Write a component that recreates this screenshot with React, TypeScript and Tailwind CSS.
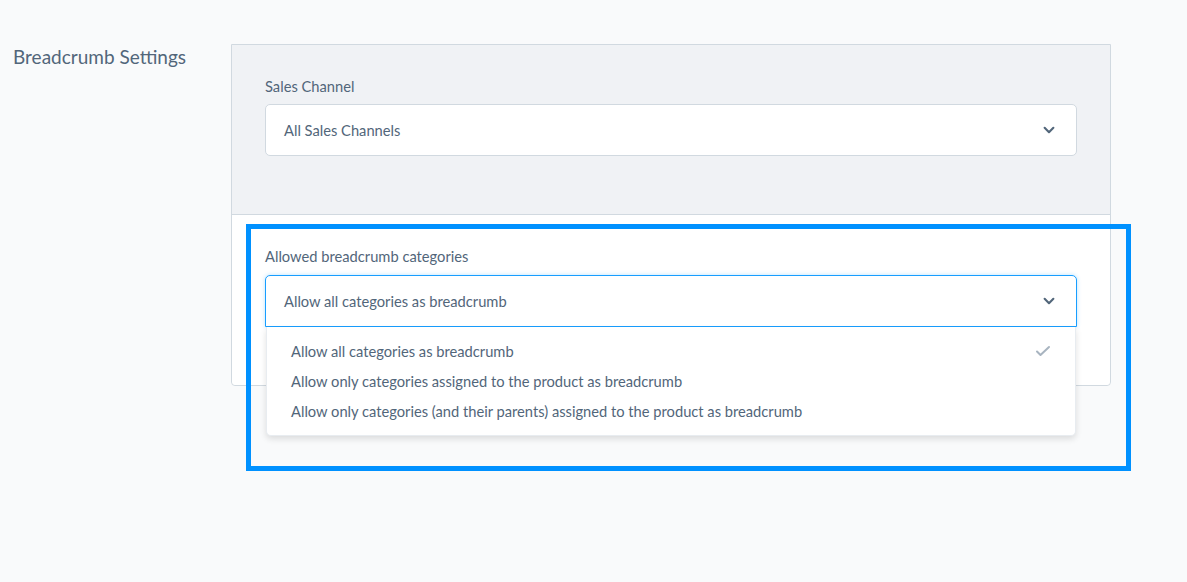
const options = [
  'Allow all categories as breadcrumb',
  'Allow only categories assigned to the product as breadcrumb',
  'Allow only categories (and their parents) assigned to the product as breadcrumb',
];

function Chevron() {
  return (
    <svg className="w-[14px] h-[14px] text-[#52667a]" viewBox="0 0 16 16" fill="none">
      <path d="M3 5.5l5 5 5-5" stroke="currentColor" strokeWidth={2.4} strokeLinecap="round" strokeLinejoin="round" />
    </svg>
  );
}

export default function App() {
  return (
    <div
      className="relative min-h-[582px] bg-[#f9fafb] text-[#52667a] pt-[44px] pl-[13px] flex"
      style={{ fontFamily: 'Lato, "Noto Sans", sans-serif' }}
    >
      <h2 className="w-[218px] text-[19px] leading-[24px] mt-[1px]">Breadcrumb Settings</h2>

      <div className="w-[880px] h-[342px] border border-[#d1d9e0] rounded-b-[4px] flex flex-col">
        {/* Sales channel */}
        <div className="bg-[#f0f2f5] h-[170px] px-[33px] pt-[31px] border-b border-[#d1d9e0]">
          <label className="block text-[14.7px] leading-[20px] mb-[8px]">Sales Channel</label>
          <div className="h-[52px] bg-white border border-[#d1d9e0] rounded-[5px] flex items-center justify-between pl-[18px] pr-[20px] text-[14.7px]">
            <span>All Sales Channels</span>
            <Chevron />
          </div>
        </div>

        {/* Breadcrumb categories */}
        <div className="bg-white flex-1 px-[33px] pt-[31px] rounded-b-[4px]">
          <label className="block text-[14.7px] leading-[20px] mb-[9px]">Allowed breadcrumb categories</label>
          <div className="relative">
            <div className="h-[52px] bg-white border border-[#189eff] rounded-t-[5px] flex items-center justify-between pl-[18px] pr-[20px] text-[14.7px] shadow-[0_0_4px_rgba(24,158,255,0.3)]">
              <span>Allow all categories as breadcrumb</span>
              <Chevron />
            </div>
            <ul className="absolute left-[1px] right-[1px] top-[52px] z-10 bg-white rounded-b-[5px] py-[9px] shadow-[0_3px_6px_rgba(0,0,0,0.12)] border-x border-b border-[#e8ecf0]">
              {options.map((o, i) => (
                <li key={i} className="h-[30px] flex items-center justify-between pl-[24px] pr-[24px] text-[14.7px]">
                  <span>{o}</span>
                  {i === 0 && (
                    <svg className="w-[16px] h-[16px] text-[#a8b4c0]" viewBox="0 0 16 16" fill="none">
                      <path d="M2 8.5l3.5 3.5L14 4" stroke="currentColor" strokeWidth={2} strokeLinecap="round" strokeLinejoin="round" />
                    </svg>
                  )}
                </li>
              ))}
            </ul>
          </div>
        </div>
      </div>

      {/* highlight frame */}
      <div className="absolute left-[246px] top-[224px] w-[885px] h-[247px] border-[5px] border-[#0091ff] z-20 pointer-events-none" />
    </div>
  );
}
